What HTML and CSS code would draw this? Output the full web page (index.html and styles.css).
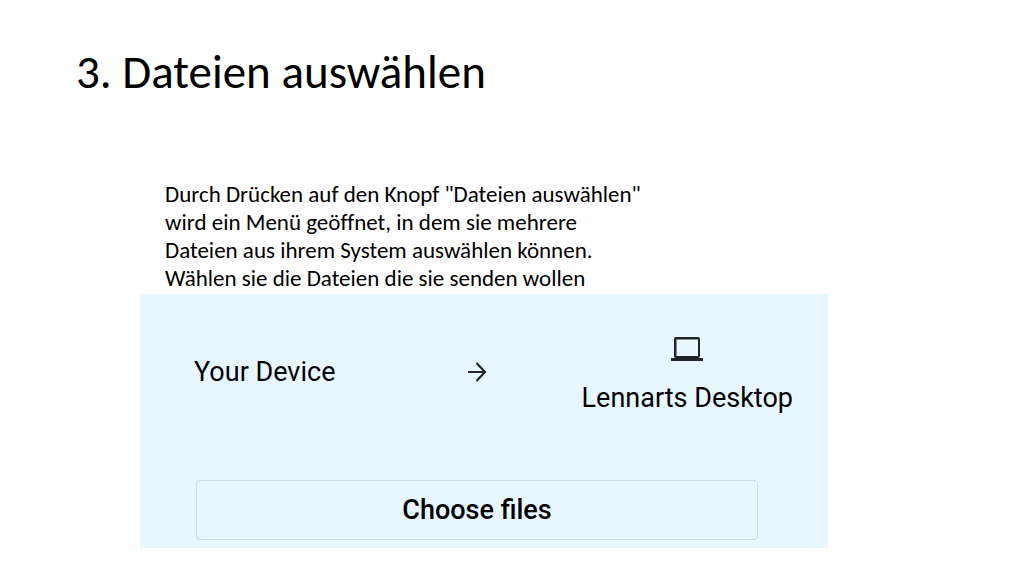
FILE: index.html
```html
<!DOCTYPE html>
<html lang="de">
<head>
<meta charset="utf-8">
<meta name="viewport" content="width=device-width, initial-scale=1">
<title>3. Dateien auswählen</title>
<link rel="stylesheet" href="styles.css">
</head>
<body>
<main class="slide">
  <h1 class="title">3. Dateien auswählen</h1>
  <p class="intro">Durch Drücken auf den Knopf "Dateien auswählen"<br>wird ein Menü geöffnet, in dem sie mehrere<br>Dateien aus ihrem System auswählen können.<br>Wählen sie die Dateien die sie senden wollen</p>
  <section class="panel" lang="en">
    <div class="transfer">
      <span class="device">Your Device</span>
      <svg class="arrow" viewBox="0 0 20 22" aria-hidden="true"><path d="M1 11H18M9.500 2L18 11L9.500 20" fill="none" stroke="#212529" stroke-width="2.200"/></svg>
      <div class="target">
        <svg class="laptop" viewBox="0 0 32 26" aria-hidden="true"><path fill="#212529" fill-rule="evenodd" d="M5 1H27Q29 1 29 3V20Q29 22 27.500 22H32V25H0V22H4.500Q3 22 3 20V3Q3 1 5 1ZM5.500 3.500V20H27V3.500Z"/></svg>
        <span class="device">Lennarts Desktop</span>
      </div>
    </div>
    <button class="choose" type="button">Choose files</button>
  </section>
</main>
</body>
</html>
```
FILE: styles.css
```css
body {
  margin: 0;
  background: #fff;
  color: #000;
}

.slide {
  padding: 44px 196px 28px 140px;
  font-family: Carlito, Calibri, Lato, sans-serif;
}

.title {
  margin: 0 0 80px -64px;
  font-size: 47px;
  font-weight: 400;
  line-height: 56px;
}

.intro {
  margin: 0;
  padding: 0 0 2px 25px;
  font-size: 23px;
  line-height: 28px;
  font-variant-ligatures: none;
}

.panel {
  display: flex;
  flex-direction: column;
  gap: 66px;
  padding: 36px 35px 8px 54px;
  background: #e8f6ff;
  font-family: Roboto, sans-serif;
}

.transfer {
  display: flex;
  align-items: center;
  justify-content: space-between;
}

.device {
  font-size: 27px;
  line-height: 32px;
}

.arrow {
  width: 20px;
  height: 22px;
  margin-left: 36px;
}

.target {
  display: flex;
  flex-direction: column;
  align-items: center;
  gap: 20px;
  padding-top: 6px;
}

.laptop {
  width: 32px;
  height: 26px;
}

.choose {
  height: 60px;
  margin: 0 35px 0 2px;
  border: 1px solid #cdd9e1;
  border-radius: 4px;
  background: transparent;
  color: #000;
  font-family: inherit;
  font-size: 27px;
  font-weight: 500;
}
```
